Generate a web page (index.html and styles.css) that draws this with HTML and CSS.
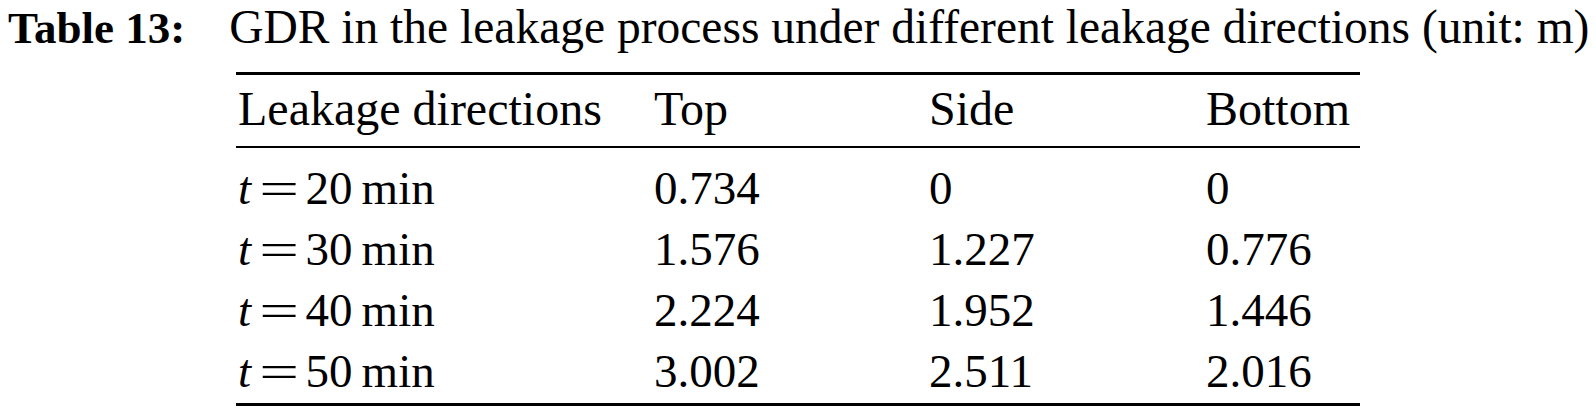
FILE: index.html
```html
<!DOCTYPE html>
<html lang="en">
<head>
    <meta charset="UTF-8">
    <title>Table 13</title>
    <link rel="stylesheet" href="styles.css">
</head>
<body>
    <div class="caption">
        <span class="label">Table 13:</span>GDR in the leakage process under different leakage directions (unit: m)
    </div>
    <table class="result-table">
        <thead>
            <tr>
                <th class="col-name">Leakage directions</th>
                <th class="col-top">Top</th>
                <th class="col-side">Side</th>
                <th class="col-bottom">Bottom</th>
            </tr>
        </thead>
        <tbody>
            <tr>
                <td><i>t</i><span class="eq">=</span>20<span class="unit">min</span></td>
                <td>0.734</td>
                <td>0</td>
                <td>0</td>
            </tr>
            <tr>
                <td><i>t</i><span class="eq">=</span>30<span class="unit">min</span></td>
                <td>1.576</td>
                <td>1.227</td>
                <td>0.776</td>
            </tr>
            <tr>
                <td><i>t</i><span class="eq">=</span>40<span class="unit">min</span></td>
                <td>2.224</td>
                <td>1.952</td>
                <td>1.446</td>
            </tr>
            <tr>
                <td><i>t</i><span class="eq">=</span>50<span class="unit">min</span></td>
                <td>3.002</td>
                <td>2.511</td>
                <td>2.016</td>
            </tr>
        </tbody>
    </table>
</body>
</html>
```

FILE: styles.css
```css
body {
    font-family: "Liberation Serif", "Times New Roman", serif;
    color: #000;
    background: #fff;
    margin: 0;
}
.caption {
    font-size: 47.5px;
    line-height: 50px;
    white-space: nowrap;
    padding-left: 8px;
    margin-top: 2px;
}
.caption .label {
    font-weight: bold;
    font-size: 45px;
    margin-right: 44px;
}
.result-table {
    border-collapse: collapse;
    width: 1124px;
    margin: 19px auto 0;
    font-size: 47px;
    line-height: 61px;
    border-top: 3px solid #000;
    border-bottom: 3px solid #000;
}
.result-table th,
.result-table td {
    text-align: left;
    font-weight: normal;
    padding: 0;
    white-space: nowrap;
}
.result-table th {
    font-size: 48px;
    padding: 3px 0 7px;
    border-bottom: 2px solid #000;
}
.result-table th:first-child,
.result-table td:first-child {
    padding-left: 2px;
}
.result-table tbody tr:first-child td {
    padding-top: 10px;
}
.result-table tbody tr:last-child td {
    padding-bottom: 1px;
}
.col-name { width: 416px; }
.col-top { width: 275px; }
.col-side { width: 277px; }
.eq {
    display: inline-block;
    transform: scaleX(1.5);
    margin: 0 13px 0 15px;
}
.unit {
    margin-left: 9px;
}
```
